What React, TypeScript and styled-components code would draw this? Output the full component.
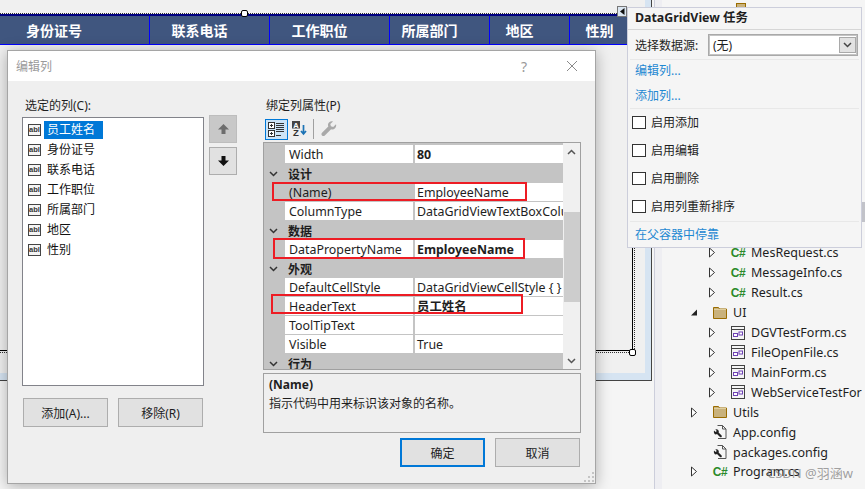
import React from "react";
import styled, { createGlobalStyle } from "styled-components";

const UI_FONT = `"Noto Sans", "Noto Sans CJK SC", sans-serif`;

const GlobalStyle = createGlobalStyle`
  * { box-sizing: border-box; }
  html, body { margin: 0; padding: 0; background: #f5f5f5; }
  body { font-family: ${UI_FONT}; font-size: 12px; color: #1e1e1e; }
`;

const Page = styled.div`
  position: relative;
  width: 865px;
  height: 489px;
  overflow: hidden;
  display: flex;
  background: #f5f5f5;
`;

/* ---------- designer surface ---------- */

const DesignerColumn = styled.div`
  width: 654px;
  flex: none;
`;
const FormFrame = styled.div`
  width: 652px;
  height: 381px;
  background: #d6e4f2;
  border-right: 1px solid #444;
  border-bottom: 1px solid #444;
`;
const FormClient = styled.div`
  width: 645px;
  height: 373px;
  padding-top: 13px;
  background: #f0f0f0;
`;
const SelectionFrame = styled.div`
  position: relative;
  width: 635px;
  height: 340px;
  padding: 0 1px 1px 0;
  border-top: 1px dotted #333;
  border-right: 1px dotted #333;
  border-bottom: 1px dotted #333;
`;
const GridHost = styled.div`
  height: 100%;
  border-right: 1px solid #000;
  border-bottom: 1px solid #000;
`;
const HeaderRow = styled.div`
  display: flex;
  height: 31px;
  background: #40567f;
  border-top: 2px solid #000080;
  border-bottom: 1px solid #0000ff;
`;
const HeaderCell = styled.div<{ $w: number; $first?: boolean }>`
  width: ${(p) => p.$w}px;
  flex: none;
  display: flex;
  align-items: center;
  justify-content: ${(p) => (p.$first ? "flex-start" : "center")};
  padding: ${(p) => (p.$first ? "0 0 0 26px" : "0 20px 0 0")};
  border-right: 1px solid #0000ff;
  color: #fff;
  font-size: 14px;
  font-weight: 700;
  white-space: nowrap;
`;
const Handle = styled.div<{ $x: number; $y: number }>`
  position: absolute;
  left: ${(p) => p.$x}px;
  top: ${(p) => p.$y}px;
  width: 7px;
  height: 7px;
  background: #fff;
  border: 1px solid #000;
  border-radius: 2px;
`;
const SmartTag = styled.div`
  position: absolute;
  left: 617px;
  top: 6px;
  width: 10px;
  height: 11px;
  background: #dbe6f1;
  border: 1px solid #777;
  display: flex;
  align-items: center;
  justify-content: center;
`;

/* ---------- solution explorer ---------- */

const Divider = styled.div`
  width: 8px;
  flex: none;
  background: #eeeef2;
  border-left: 1px solid #cccedb;
`;
const Explorer = styled.div`
  flex: 1;
  min-width: 0;
  padding-top: 243px;
  overflow: hidden;
`;
const TreeRow = styled.div<{ $level: number }>`
  display: flex;
  align-items: center;
  height: 19.92px;
  padding-left: ${(p) => (p.$level === 2 ? 46 : 28)}px;
  font-size: 12.5px;
  color: #1e1e1e;
  white-space: nowrap;
`;
const ExpanderSlot = styled.span`
  width: 9px;
  flex: none;
  display: flex;
`;
const IconSlot = styled.span`
  width: 14px;
  height: 14px;
  margin: 0 6px 0 14px;
  flex: none;
  display: flex;
  align-items: center;
  justify-content: center;
`;
const CsGlyph = styled.span`
  font-family: "Liberation Sans", sans-serif;
  font-size: 12px;
  font-weight: 700;
  letter-spacing: -0.5px;
  color: #2b8a2b;
`;
const FolderPeek = styled.div`
  position: absolute;
  left: 736px;
  top: 3px;
  width: 10px;
  height: 4px;
  background: #c9b27c;
  border: 1px solid #9a6c00;
  border-bottom: none;
`;
const ScrollEdge = styled.div`
  width: 3px;
  flex: none;
  padding-top: 202px;
  background: #f5f5f5;
`;
const ScrollEdgeThumb = styled.div`
  height: 20px;
  background: #c2c3c9;
`;
const Watermark = styled.div`
  position: absolute;
  left: 767px;
  top: 463px;
  font-size: 13px;
  color: rgba(110, 110, 110, 0.65);
  white-space: nowrap;
`;

/* ---------- edit columns dialog ---------- */

const Dialog = styled.div`
  position: absolute;
  left: 7px;
  top: 50px;
  width: 589px;
  height: 434px;
  background: #efefef;
  border: 1px solid #a5a5a5;
  box-shadow: 0 2px 14px rgba(0, 0, 0, 0.3);
`;
const TitleBar = styled.div`
  height: 30px;
  background: #fff;
  display: flex;
  align-items: center;
  padding: 0 17px 0 8px;
  color: #9a9a9a;
  font-size: 12px;
`;
const TitleText = styled.span`
  flex: 1;
`;
const HelpMark = styled.span`
  width: 45px;
  font-size: 14px;
  color: #999;
`;
const DialogBody = styled.div`
  position: relative;
  display: flex;
  padding: 17px 0 0 14px;
`;
const LeftPane = styled.div`
  width: 182px;
  flex: none;
`;
const FieldLabel = styled.div<{ $inset: number }>`
  height: 16px;
  line-height: 16px;
  padding-left: ${(p) => p.$inset}px;
  font-size: 12px;
  white-space: nowrap;
`;
const ColumnList = styled.div`
  height: 269px;
  margin-top: 3px;
  padding: 2px 0 0 5px;
  background: #fff;
  border: 1px solid #82838a;
`;
const ColumnItem = styled.div`
  display: flex;
  align-items: center;
  gap: 3px;
  height: 20px;
`;
const FieldIcon = styled.span`
  width: 13px;
  height: 12px;
  flex: none;
  border: 1px solid #444;
  background: #f4f4f4;
  font-family: "Liberation Sans", sans-serif;
  font-size: 7.5px;
  font-weight: 700;
  line-height: 9px;
  text-align: center;
  color: #333;
`;
const ColumnName = styled.span<{ $selected?: boolean }>`
  height: 18px;
  line-height: 18px;
  padding: 0 8px 0 3px;
  color: ${(p) => (p.$selected ? "#fff" : "#111")};
  background: ${(p) => (p.$selected ? "#0078d7" : "transparent")};
`;
const ListActions = styled.div`
  display: flex;
  justify-content: space-between;
  padding: 0 1px;
  margin-top: 12px;
`;
const DialogButton = styled.button<{ $primary?: boolean }>`
  width: 85px;
  height: 29px;
  padding: 0;
  background: #e1e1e1;
  border: ${(p) => (p.$primary ? "2px solid #0078d7" : "1px solid #adadad")};
  font-family: ${UI_FONT};
  font-size: 12px;
  color: #1e1e1e;
`;
const MoveColumn = styled.div`
  width: 28px;
  flex: none;
  margin-left: 5px;
  padding-top: 17px;
  display: flex;
  flex-direction: column;
  gap: 4px;
`;
const MoveButton = styled.div<{ $disabled?: boolean }>`
  height: 28px;
  display: flex;
  align-items: center;
  justify-content: center;
  background: ${(p) => (p.$disabled ? "#c8c8c8" : "#e1e1e1")};
  border: 1px solid ${(p) => (p.$disabled ? "#bdbdbd" : "#adadad")};
`;
const RightPane = styled.div`
  width: 318px;
  flex: none;
  margin-left: 26px;
`;
const Toolbar = styled.div`
  display: flex;
  align-items: center;
  height: 22px;
  margin: 4px 0 2px 2px;
`;
const ToolButton = styled.div<{ $active?: boolean }>`
  width: 23px;
  height: 21px;
  display: flex;
  align-items: center;
  justify-content: center;
  background: ${(p) => (p.$active ? "#cce4f7" : "transparent")};
  border: 1px solid ${(p) => (p.$active ? "#0078d7" : "transparent")};
`;
const ToolSeparator = styled.div`
  width: 1px;
  height: 20px;
  margin: 0 3px 0 2px;
  background: #a0a0a0;
`;
const PropertyGrid = styled.div`
  position: relative;
  display: flex;
  height: 228px;
  background: #f0f0f0;
  border: 1px solid #a0a0a0;
  overflow: hidden;
`;
const PropertyRows = styled.div`
  width: 299px;
  flex: none;
  padding-top: 2px;
  background: #c4c4c4;
`;
const PropertyRow = styled.div`
  display: grid;
  grid-template-columns: 21px 128px 1fr;
  height: 19px;
  line-height: 20px;
  font-size: 12.4px;
`;
const Gutter = styled.div`
  background: #c4c4c4;
`;
const NameCell = styled.div<{ $selected?: boolean }>`
  padding-left: 4px;
  height: 18px;
  background: ${(p) => (p.$selected ? "#c4c4c4" : "#fff")};
  white-space: nowrap;
  overflow: hidden;
`;
const ValueCell = styled.div<{ $bold?: boolean }>`
  height: 18px;
  margin-left: 2px;
  padding-left: 2px;
  background: #fff;
  font-weight: ${(p) => (p.$bold ? 700 : 400)};
  white-space: nowrap;
  overflow: hidden;
`;
const CategoryRow = styled.div`
  display: flex;
  align-items: center;
  height: 19px;
  padding-left: 5px;
  background: #c4c4c4;
  font-size: 12px;
  font-weight: 700;
`;
const CategoryName = styled.span`
  margin-left: 10px;
`;
const GridScrollbar = styled.div`
  flex: 1;
  display: flex;
  flex-direction: column;
  align-items: center;
  background: #f0f0f0;
`;
const ScrollArrow = styled.div`
  height: 17px;
  flex: none;
  display: flex;
  align-items: center;
  justify-content: center;
`;
const ScrollTrack = styled.div`
  flex: 1;
  width: 100%;
  padding: 52px 0 0 1px;
`;
const ScrollThumb = styled.div`
  height: 90px;
  background: #cdcdcd;
`;
const Description = styled.div`
  height: 60px;
  margin-top: 3px;
  padding: 2px 5px;
  border: 1px solid #a0a0a0;
  line-height: 18px;
`;
const DescriptionTitle = styled.div`
  margin-bottom: 1px;
  font-weight: 700;
`;
const DialogActions = styled.div`
  display: flex;
  justify-content: flex-end;
  gap: 10px;
  margin-top: 5px;
  padding-right: 1px;
`;
const RedMark = styled.div<{ $x: number; $y: number; $w: number; $h: number }>`
  position: absolute;
  left: ${(p) => p.$x}px;
  top: ${(p) => p.$y}px;
  width: ${(p) => p.$w}px;
  height: ${(p) => p.$h}px;
  border: 2px solid #ed1c24;
  pointer-events: none;
`;
const CloseGlyph = styled.svg`
  display: block;
`;
const ResizeGrip = styled.svg`
  position: absolute;
  right: 1px;
  bottom: 1px;
`;

/* ---------- task popup ---------- */

const TaskPanel = styled.div`
  position: absolute;
  left: 627px;
  top: 7px;
  width: 235px;
  height: 241px;
  background: #f5f5f5;
  border: 1px solid #cccedb;
`;
const TaskTitle = styled.div`
  height: 22px;
  line-height: 20px;
  padding-left: 7px;
  border-bottom: 1px solid #d6d6d6;
  font-size: 12.4px;
  font-weight: 700;
  white-space: nowrap;
`;
const TaskSection = styled.div<{ $gap?: number; $bottom?: number }>`
  display: flex;
  flex-direction: column;
  gap: ${(p) => p.$gap ?? 0}px;
  margin: 0 2px;
  padding-bottom: ${(p) => p.$bottom ?? 0}px;
  border-bottom: 1px solid #e8e8e8;
`;
const SourceRow = styled.div`
  display: flex;
  align-items: center;
  height: 29px;
  padding: 0 1px 0 5px;
`;
const SourceLabel = styled.span`
  width: 73px;
  flex: none;
  font-size: 12px;
`;
const SourceSelect = styled.div`
  flex: 1;
  height: 22px;
  display: flex;
  align-items: center;
  justify-content: space-between;
  padding: 0 1px 0 4px;
  background: #fff;
  border: 1px solid #a9a9a9;
  outline: 1px solid #c4c4c4;
  outline-offset: -2px;
`;
const SelectButton = styled.span`
  width: 17px;
  height: 16px;
  display: flex;
  align-items: center;
  justify-content: center;
  background: #e2e2e2;
  border: 1px solid #a9a9a9;
`;
const TaskLink = styled.a`
  display: block;
  height: 22px;
  line-height: 22px;
  padding-left: 5px;
  color: #1e88d2;
  font-size: 12px;
`;
const CheckRow = styled.label`
  display: flex;
  align-items: center;
  gap: 5px;
  height: 26px;
  padding-left: 2px;
  font-size: 12px;
`;
const CheckBox = styled.span`
  width: 14px;
  height: 13px;
  flex: none;
  background: #fff;
  border: 1px solid #333;
`;
const DockLink = styled(TaskLink)`
  margin: 2px 2px 0;
`;

/* ---------- drawings ---------- */

const Expander = ({ open }: { open?: boolean }) => (
  <svg width="9" height="11" viewBox="0 0 9 11">
    {open ? (
      <polygon points="1,8.5 7,8.5 7,2.5" fill="#222" />
    ) : (
      <polygon points="1.5,1 1.5,10 6.5,5.5" fill="#fff" stroke="#333" />
    )}
  </svg>
);

const CsIcon = () => <CsGlyph>C#</CsGlyph>;

const FolderIcon = () => (
  <svg width="14" height="12" viewBox="0 0 14 12">
    <path d="M.5 11.5V.5h5l1 1.5h7v9.5z" fill="#c9b27c" stroke="#9a6c00" />
    <path d="M1 2.5h12" stroke="#e0cf9f" />
  </svg>
);

const FormIcon = () => (
  <svg width="14" height="14" viewBox="0 0 14 14">
    <rect x=".5" y=".5" width="13" height="13" fill="#f5f5f5" stroke="#424242" />
    <path d="M1 3.500h12" stroke="#424242" />
    <rect x="2.500" y="7.500" width="4" height="3" fill="#fff" stroke="#6f42b5" />
    <rect x="8" y="6" width="3.500" height="3" fill="#fff" stroke="#6f42b5" />
  </svg>
);

const ConfigIcon = () => (
  <svg width="14" height="14" viewBox="0 0 14 14">
    <path d="M4.500 .5h5l3.500 3.500v9.500H5" fill="#f5f5f5" stroke="#555" />
    <path d="M9.500 .5v3.500H13" fill="none" stroke="#555" />
    <path
      d="M1 5.500l1.600 1.600 1.200-1.200L2.400 4.400C3.800 3.800 5.600 4.600 5.800 6.200c0 .5 0 .9-.2 1.300l3 3c.4.500.4 1-.1 1.500-.5.4-1 .4-1.500 0l-3-3C2.300 10.400.2 8.400 1 5.500z"
      fill="#222"
    />
  </svg>
);

const CategorizedIcon = () => (
  <svg width="17" height="15" viewBox="0 0 17 15">
    <rect x=".5" y=".5" width="6" height="6" fill="#fff" stroke="#333" />
    <rect x=".5" y="8.500" width="6" height="6" fill="#fff" stroke="#333" />
    <path d="M2 3.500h3M3.500 2v3M2 11.500h3M3.500 10v3" stroke="#333" />
    <path d="M8 1.500h8M8 3.500h8M8 5.500h8M8 7.500h8M8 9.500h8M8 13.500h5" stroke="#333" />
  </svg>
);

const SortIcon = () => (
  <svg width="15" height="16" viewBox="0 0 15 16">
    <rect x="0" y="0" width="8" height="7.500" fill="#444" />
    <text x="4" y="6.500" textAnchor="middle" fontSize="7.500" fontWeight="700" fill="#fff" fontFamily="Liberation Sans">A</text>
    <text x="4" y="15" textAnchor="middle" fontSize="9.500" fontWeight="700" fill="#333" fontFamily="Liberation Sans">Z</text>
    <path d="M11.500 4v9M9 10l2.500 3 2.500-3" fill="none" stroke="#1c73b5" strokeWidth="1.700" />
  </svg>
);

const WrenchIcon = () => (
  <svg width="16" height="16" viewBox="0 0 16 16">
    <path
      d="M15 3.200l-2.800 2.700-2.300-.6-.6-2.300L12 .4C9.800-.3 7.200 1 7 3.500c-.1.700 0 1.300.3 1.900L1 11.700c-.8.800-.8 2 0 2.800.800.800 2 .800 2.800 0l6.300-6.300c2.800 1 5.900-1.600 4.900-5z"
      fill="#a9a9a9"
    />
  </svg>
);

const ArrowUpIcon = () => (
  <svg width="11" height="10" viewBox="0 0 11 10">
    <path d="M5.500 0L11 5.500H7.500V10h-4V5.500H0z" fill="#6d6d6d" />
  </svg>
);

const ArrowDownIcon = () => (
  <svg width="11" height="10" viewBox="0 0 11 10">
    <path d="M5.500 10L0 4.500h3.500V0h4v4.500H11z" fill="#111" />
  </svg>
);

const Chevron = ({ up, color = "#444" }: { up?: boolean; color?: string }) => (
  <svg width="9" height="6" viewBox="0 0 9 6">
    <path d={up ? "M1 5l3.500-3.500L8 5" : "M1 1l3.500 3.500L8 1"} fill="none" stroke={color} strokeWidth="1.500" />
  </svg>
);

/* ---------- data ---------- */

const headerCells = [
  { label: "身份证号", w: 150, first: true },
  { label: "联系电话", w: 120 },
  { label: "工作职位", w: 120 },
  { label: "所属部门", w: 100 },
  { label: "地区", w: 80 },
  { label: "性别", w: 80 },
];

const columnNames = ["员工姓名", "身份证号", "联系电话", "工作职位", "所属部门", "地区", "性别"];

type GridEntry =
  | { category: string }
  | { name: string; value: string; bold?: boolean; selected?: boolean };

const gridEntries: GridEntry[] = [
  { name: "Width", value: "80", bold: true },
  { category: "设计" },
  { name: "(Name)", value: "EmployeeName", selected: true },
  { name: "ColumnType", value: "DataGridViewTextBoxColumn" },
  { category: "数据" },
  { name: "DataPropertyName", value: "EmployeeName", bold: true },
  { category: "外观" },
  { name: "DefaultCellStyle", value: "DataGridViewCellStyle { }" },
  { name: "HeaderText", value: "员工姓名", bold: true },
  { name: "ToolTipText", value: "" },
  { name: "Visible", value: "True" },
  { category: "行为" },
];

const treeRows: { label: string; level: number; icon: React.ReactNode; expander?: "open" | "closed" }[] = [
  { label: "MesRequest.cs", level: 2, icon: <CsIcon />, expander: "closed" },
  { label: "MessageInfo.cs", level: 2, icon: <CsIcon />, expander: "closed" },
  { label: "Result.cs", level: 2, icon: <CsIcon />, expander: "closed" },
  { label: "UI", level: 1, icon: <FolderIcon />, expander: "open" },
  { label: "DGVTestForm.cs", level: 2, icon: <FormIcon />, expander: "closed" },
  { label: "FileOpenFile.cs", level: 2, icon: <FormIcon />, expander: "closed" },
  { label: "MainForm.cs", level: 2, icon: <FormIcon />, expander: "closed" },
  { label: "WebServiceTestForm.cs", level: 2, icon: <FormIcon />, expander: "closed" },
  { label: "Utils", level: 1, icon: <FolderIcon />, expander: "closed" },
  { label: "App.config", level: 1, icon: <ConfigIcon /> },
  { label: "packages.config", level: 1, icon: <ConfigIcon /> },
  { label: "Program.cs", level: 1, icon: <CsIcon />, expander: "closed" },
];

const taskChecks = ["启用添加", "启用编辑", "启用删除", "启用列重新排序"];

export default function App() {
  return (
    <Page>
      <GlobalStyle />

      <DesignerColumn>
        <FormFrame>
          <FormClient>
            <SelectionFrame>
              <GridHost>
                <HeaderRow>
                  {headerCells.map((cell) => (
                    <HeaderCell key={cell.label} $w={cell.w} $first={cell.first}>
                      {cell.label}
                    </HeaderCell>
                  ))}
                </HeaderRow>
              </GridHost>
              <Handle $x={241} $y={-4} />
              <Handle $x={629} $y={335} />
            </SelectionFrame>
          </FormClient>
        </FormFrame>
      </DesignerColumn>

      <Divider />

      <Explorer>
        {treeRows.map((row) => (
          <TreeRow key={row.label} $level={row.level}>
            <ExpanderSlot>{row.expander && <Expander open={row.expander === "open"} />}</ExpanderSlot>
            <IconSlot>{row.icon}</IconSlot>
            {row.label}
          </TreeRow>
        ))}
      </Explorer>
      <ScrollEdge>
        <ScrollEdgeThumb />
      </ScrollEdge>
      <FolderPeek />
      <Watermark>CSDN @羽涵w</Watermark>

      <SmartTag>
        <svg width="5" height="7" viewBox="0 0 5 7">
          <polygon points="4.500,0 4.500,7 0,3.500" fill="#111" />
        </svg>
      </SmartTag>

      <TaskPanel>
        <TaskTitle>DataGridView 任务</TaskTitle>
        <TaskSection>
          <SourceRow>
            <SourceLabel>选择数据源:</SourceLabel>
            <SourceSelect>
              (无)
              <SelectButton>
                <Chevron />
              </SelectButton>
            </SourceSelect>
          </SourceRow>
        </TaskSection>
        <TaskSection $gap={3} $bottom={1}>
          <TaskLink>编辑列...</TaskLink>
          <TaskLink>添加列...</TaskLink>
        </TaskSection>
        <TaskSection $gap={2} $bottom={2}>
          {taskChecks.map((label) => (
            <CheckRow key={label}>
              <CheckBox />
              {label}
            </CheckRow>
          ))}
        </TaskSection>
        <DockLink>在父容器中停靠</DockLink>
      </TaskPanel>

      <Dialog>
        <TitleBar>
          <TitleText>编辑列</TitleText>
          <HelpMark>?</HelpMark>
          <CloseGlyph width="12" height="12" viewBox="0 0 12 12">
            <path d="M1 1l10 10M11 1L1 11" stroke="#8a8a8a" />
          </CloseGlyph>
        </TitleBar>
        <DialogBody>
          <LeftPane>
            <FieldLabel $inset={3}>选定的列(C):</FieldLabel>
            <ColumnList>
              {columnNames.map((name, i) => (
                <ColumnItem key={name}>
                  <FieldIcon>abl</FieldIcon>
                  <ColumnName $selected={i === 0}>{name}</ColumnName>
                </ColumnItem>
              ))}
            </ColumnList>
            <ListActions>
              <DialogButton>添加(A)...</DialogButton>
              <DialogButton>移除(R)</DialogButton>
            </ListActions>
          </LeftPane>

          <MoveColumn>
            <MoveButton $disabled>
              <ArrowUpIcon />
            </MoveButton>
            <MoveButton>
              <ArrowDownIcon />
            </MoveButton>
          </MoveColumn>

          <RightPane>
            <FieldLabel $inset={3}>绑定列属性(P)</FieldLabel>
            <Toolbar>
              <ToolButton $active>
                <CategorizedIcon />
              </ToolButton>
              <ToolButton>
                <SortIcon />
              </ToolButton>
              <ToolSeparator />
              <ToolButton>
                <WrenchIcon />
              </ToolButton>
            </Toolbar>
            <PropertyGrid>
              <PropertyRows>
                {gridEntries.map((entry) =>
                  "category" in entry ? (
                    <CategoryRow key={entry.category}>
                      <Chevron color="#333" />
                      <CategoryName>{entry.category}</CategoryName>
                    </CategoryRow>
                  ) : (
                    <PropertyRow key={entry.name}>
                      <Gutter />
                      <NameCell $selected={entry.selected}>{entry.name}</NameCell>
                      <ValueCell $bold={entry.bold}>{entry.value}</ValueCell>
                    </PropertyRow>
                  )
                )}
              </PropertyRows>
              <GridScrollbar>
                <ScrollArrow>
                  <Chevron up color="#555" />
                </ScrollArrow>
                <ScrollTrack>
                  <ScrollThumb />
                </ScrollTrack>
                <ScrollArrow>
                  <Chevron color="#555" />
                </ScrollArrow>
              </GridScrollbar>
            </PropertyGrid>
            <Description>
              <DescriptionTitle>(Name)</DescriptionTitle>
              指示代码中用来标识该对象的名称。
            </Description>
            <DialogActions>
              <DialogButton $primary>确定</DialogButton>
              <DialogButton>取消</DialogButton>
            </DialogActions>
          </RightPane>

          <RedMark $x={264} $y={101} $w={255} $h={19} />
          <RedMark $x={265} $y={157} $w={252} $h={21} />
          <RedMark $x={263} $y={213} $w={252} $h={20} />
        </DialogBody>
        <ResizeGrip width="10" height="10" viewBox="0 0 10 10">
          <path d="M8 0h2v2H8zM4 4h2v2H4zM8 4h2v2H8zM0 8h2v2H0zM4 8h2v2H4zM8 8h2v2H8z" fill="#c4c4c4" />
        </ResizeGrip>
      </Dialog>
    </Page>
  );
}
